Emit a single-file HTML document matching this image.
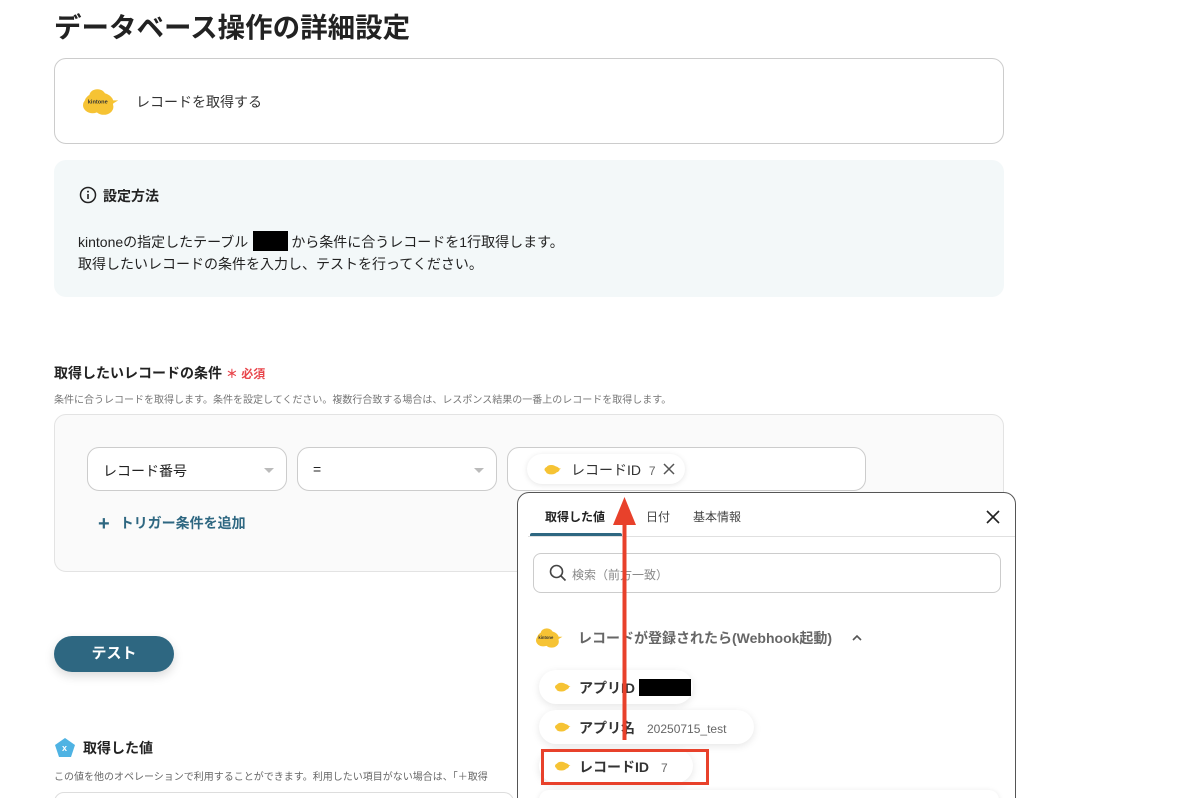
<!DOCTYPE html>
<html><head><meta charset="utf-8"><style>
*{box-sizing:border-box;margin:0;padding:0}
html,body{width:1178px;height:798px;overflow:hidden}
body{background:#fff;font-family:"Liberation Sans","Noto Sans CJK JP",sans-serif;color:#222;position:relative}
.a{position:absolute}
.sel{position:absolute;height:44px;border:1px solid #ccc;border-radius:12px;background:#fff;font-size:14px;padding:13px 15px;color:#222}
.tri{position:absolute;right:12px;top:20px;border-left:5px solid transparent;border-right:5px solid transparent;border-top:5px solid #bbb}
.chip{position:absolute;height:34px;border-radius:17px;background:#fff;box-shadow:0 2px 8px rgba(0,0,0,.1);font-size:14px;font-weight:bold;padding:8px 0 0 40px;color:#333}
.chip .v{font-weight:normal;color:#666;font-size:12px;margin-left:8px}
</style></head><body>
<svg width="0" height="0" style="position:absolute"><defs><g id="kt"><ellipse cx="12" cy="10" rx="9" ry="6" fill="#f6c334"/><ellipse cx="8" cy="12" rx="6" ry="5" fill="#f6c334"/><ellipse cx="15" cy="13" rx="6" ry="5" fill="#f6c334"/><ellipse cx="11" cy="6" rx="5" ry="4" fill="#f6c334"/><path d="M19 9 L24 9 L19 12Z" fill="#f6c334"/></g>
<g id="kf"><ellipse cx="12" cy="10" rx="10" ry="5" fill="#f6c334"/><ellipse cx="11" cy="7" rx="6" ry="3" fill="#f6c334"/><ellipse cx="11" cy="13" rx="7" ry="3.5" fill="#f6c334"/><path d="M20 8 L24 9 L20 11Z" fill="#f6c334"/></g></defs></svg>

<div class="a" style="left:54px;top:5px;font-size:27.5px;font-weight:bold;color:#222">データベース操作の詳細設定</div>

<div class="a" style="left:54px;top:58px;width:950px;height:86px;border:1px solid #ccc;border-radius:12px"></div>
<svg class="a" style="left:79px;top:86px" width="40" height="32" viewBox="0 0 24 20"><use href="#kt"/><text x="5" y="11" font-size="3.5" font-weight="bold" fill="#333" font-family="Liberation Sans">kintone</text></svg>
<div class="a" style="left:136px;top:92px;font-size:14px;color:#333">レコードを取得する</div>

<div class="a" style="left:54px;top:160px;width:950px;height:137px;background:#f3f8f9;border-radius:12px"></div>
<svg class="a" style="left:79px;top:186px" width="18" height="18" viewBox="0 0 18 18"><circle cx="9" cy="9" r="7.5" fill="none" stroke="#222" stroke-width="1.5"/><rect x="8.2" y="8" width="1.6" height="5" fill="#222"/><circle cx="9" cy="5.6" r="1" fill="#222"/></svg>
<div class="a" style="left:103px;top:186px;font-size:14px;font-weight:bold">設定方法</div>
<div class="a" style="left:78px;top:231px;font-size:14px;line-height:22px;color:#222">kintoneの指定したテーブル<span style="display:inline-block;width:35px;height:20px;background:#000;vertical-align:-4px;margin:0 3px 0 5px"></span>から条件に合うレコードを1行取得します。<br>取得したいレコードの条件を入力し、テストを行ってください。</div>

<div class="a" style="left:54px;top:363px;font-size:14px;font-weight:bold">取得したいレコードの条件 <span style="color:#e8454b;font-size:12px">＊ 必須</span></div>
<div class="a" style="left:54px;top:391px;font-size:10px;color:#777">条件に合うレコードを取得します。条件を設定してください。複数行合致する場合は、レスポンス結果の一番上のレコードを取得します。</div>

<div class="a" style="left:54px;top:414px;width:950px;height:158px;background:#fafafa;border:1px solid #e3e3e3;border-radius:12px"></div>
<div class="sel" style="left:87px;top:447px;width:200px">レコード番号<div class="tri"></div></div>
<div class="sel" style="left:297px;top:447px;width:200px">=<div class="tri"></div></div>
<div class="sel" style="left:507px;top:447px;width:359px"></div>
<div class="a" style="left:527px;top:454px;width:158px;height:30px;border-radius:15px;background:#fff;box-shadow:0 1px 6px rgba(0,0,0,.1)"></div>
<svg class="a" style="left:542px;top:462px" width="20" height="15" viewBox="0 0 24 20"><use href="#kf"/></svg>
<div class="a" style="left:571px;top:460px;font-size:14px;color:#333">レコードID <span style="font-size:12px;color:#666;margin-left:4px">7</span></div>
<svg class="a" style="left:662px;top:462px" width="14" height="14" viewBox="0 0 14 14"><path d="M2 2L12 12M12 2L2 12" stroke="#555" stroke-width="1.5"/></svg>

<div class="a" style="left:98px;top:513px;font-size:14px;font-weight:bold;color:#2e6781"><span style="font-size:20px;vertical-align:-2px;margin-right:10px">+</span>トリガー条件を追加</div>

<div class="a" style="left:54px;top:636px;width:120px;height:36px;border-radius:18px;background:#2e6781;color:#fff;font-size:15px;font-weight:bold;text-align:center;line-height:36px;box-shadow:0 4px 10px rgba(0,0,0,.15)">テスト</div>

<svg class="a" style="left:55px;top:738px" width="20" height="19" viewBox="0 0 20 19"><path d="M10 0L20 7L16 19H4L0 7Z" fill="#4fb3e3"/><text x="7" y="13" font-size="9" fill="#fff" font-family="Liberation Sans" font-weight="bold">x</text></svg>
<div class="a" style="left:83px;top:738px;font-size:14px;font-weight:bold">取得した値</div>
<div class="a" style="left:54px;top:768px;font-size:10px;color:#666;white-space:nowrap">この値を他のオペレーションで利用することができます。利用したい項目がない場合は、「＋取得</div>
<div class="a" style="left:54px;top:792px;width:460px;height:20px;border:1px solid #ddd;border-radius:10px"></div>

<div class="a" style="left:517px;top:492px;width:499px;height:320px;background:#fff;border:1px solid #555;border-radius:12px;overflow:hidden">
 <div class="a" style="left:27px;top:15px;font-size:12px;font-weight:bold;color:#222">取得した値</div>
 <div class="a" style="left:128px;top:15px;font-size:12px;color:#444">日付</div>
 <div class="a" style="left:175px;top:15px;font-size:12px;color:#444">基本情報</div>
 <svg class="a" style="left:467px;top:16px" width="16" height="16" viewBox="0 0 16 16"><path d="M2 2L14 14M14 2L2 14" stroke="#222" stroke-width="1.6"/></svg>
 <div class="a" style="left:12px;top:40px;width:92px;height:4px;background:#2e6781;border-radius:2px 2px 0 0"></div>
 <div class="a" style="left:10px;top:43px;width:487px;height:1px;background:#e0e0e0"></div>
 <div class="a" style="left:15px;top:60px;width:468px;height:40px;border:1px solid #ccc;border-radius:8px"></div>
 <svg class="a" style="left:31px;top:71px" width="18" height="18" viewBox="0 0 18 18"><circle cx="7.5" cy="7.5" r="6" fill="none" stroke="#444" stroke-width="1.6"/><path d="M12 12L16.5 16.5" stroke="#444" stroke-width="1.6"/></svg>
 <div class="a" style="left:54px;top:73px;font-size:12px;color:#888">検索（前方一致）</div>
 <svg class="a" style="left:15px;top:133px" width="30" height="24" viewBox="0 0 24 20"><use href="#kt"/><text x="4" y="11" font-size="3.5" font-weight="bold" fill="#333" font-family="Liberation Sans">kintone</text></svg>
 <div class="a" style="left:60px;top:135px;font-size:14px;font-weight:bold;color:#666">レコードが登録されたら(Webhook起動)</div>
 <svg class="a" style="left:333px;top:140px" width="12" height="10" viewBox="0 0 12 10"><path d="M2 7L6 3L10 7" fill="none" stroke="#555" stroke-width="1.6"/></svg>
</div>
<div class="chip" style="left:539px;top:670px;width:154px">アプリID <span style="display:inline-block;width:52px;height:17px;background:#000;vertical-align:-3px"></span></div>
<div class="chip" style="left:539px;top:710px;width:215px">アプリ名<span class="v" style="margin-left:12px">20250715_test</span></div>
<div class="chip" style="left:539px;top:749px;width:154px">レコードID<span class="v" style="margin-left:12px">7</span></div>
<svg class="a" style="left:552px;top:680px" width="20" height="14" viewBox="0 0 24 20"><use href="#kf"/></svg>
<svg class="a" style="left:552px;top:720px" width="20" height="14" viewBox="0 0 24 20"><use href="#kf"/></svg>
<svg class="a" style="left:552px;top:759px" width="20" height="14" viewBox="0 0 24 20"><use href="#kf"/></svg>
<div class="a" style="left:539px;top:790px;width:460px;height:20px;background:#fff;border-radius:10px;box-shadow:0 1px 6px rgba(0,0,0,.1)"></div>

<div class="a" style="left:541px;top:749px;width:168px;height:36px;border:3px solid #e8412b"></div>
<svg class="a" style="left:605px;top:495px" width="40" height="250" viewBox="0 0 40 250"><path d="M19.5 27V245" stroke="#e8412b" stroke-width="4"/><path d="M8 30L19.5 2L31 30Z" fill="#e8412b"/></svg>
</body></html>
